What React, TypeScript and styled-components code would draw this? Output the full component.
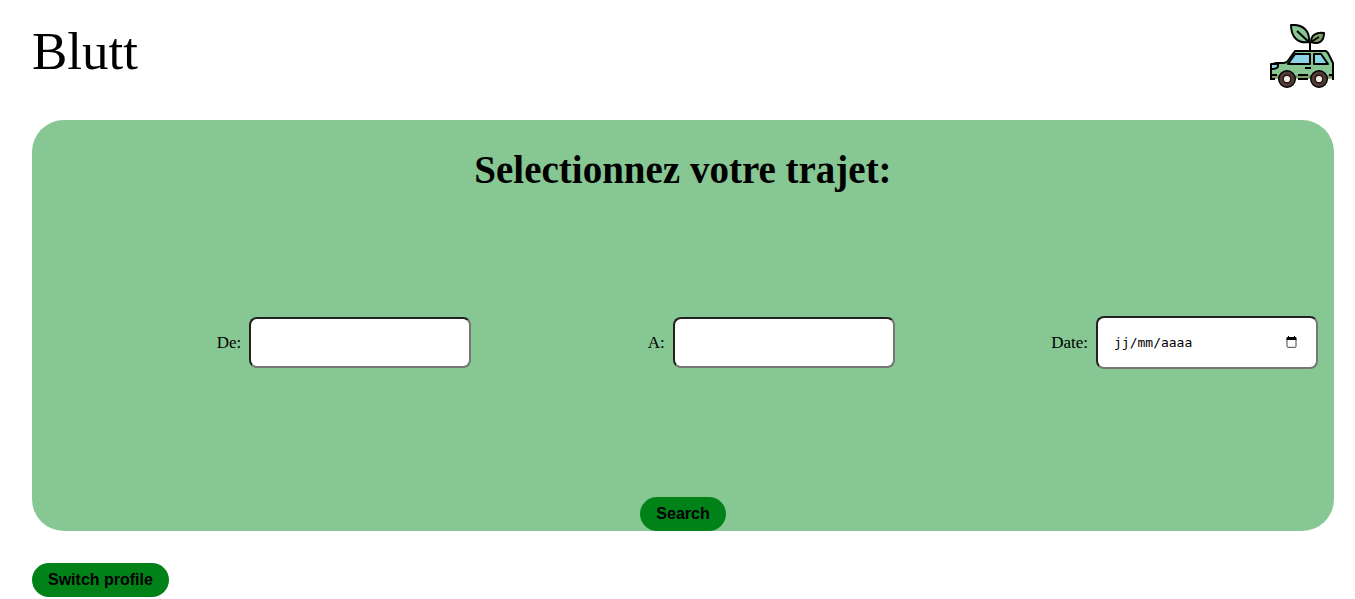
import React from "react";
import styled, { createGlobalStyle } from "styled-components";

const GlobalStyle = createGlobalStyle`
  *, *::before, *::after { box-sizing: border-box; }
  body {
    margin: 0;
    background: #fff;
    color: #000;
    font-family: Georgia, "Liberation Serif", serif;
    font-size: 17px;
  }
`;

const Page = styled.div`
  padding: 24px 21px 0 32px;
`;

const Header = styled.header`
  display: flex;
  align-items: flex-start;
  justify-content: space-between;
  margin-bottom: 32px;
`;

const Brand = styled.div`
  font-size: 53px;
  line-height: 54px;
`;

const Logo = styled.svg`
  display: block;
  width: 64px;
  height: 64px;
`;

const Panel = styled.form`
  display: flex;
  flex-direction: column;
  align-items: center;
  margin: 0 0 32px;
  border-radius: 32px;
  background: #87c793;
`;

const Title = styled.h1`
  margin: 0;
  padding-top: 28px;
  font-size: 39px;
  line-height: 44px;
  text-align: center;
`;

const Fields = styled.div`
  display: grid;
  grid-template-columns: repeat(3, 1fr);
  align-items: center;
  width: 100%;
  padding: 124px 16px 128px;
`;

const Field = styled.div`
  display: flex;
  align-items: center;
  justify-content: flex-end;
  gap: 8px;
`;

const InputBox = styled.div`
  position: relative;
  width: 222px;
`;

const Input = styled.input<{ $tall?: boolean }>`
  display: block;
  width: 100%;
  height: ${(p) => (p.$tall ? 53 : 51)}px;
  padding: 0 16px;
  border: 2px solid;
  border-color: #212121 #767676 #767676 #212121;
  border-radius: 8px;
  background: #fff;
  font-family: "DejaVu Sans Mono", monospace;
  font-size: 13px;

  &::placeholder {
    color: #000;
    opacity: 1;
  }
`;

const CalendarIcon = styled.svg`
  position: absolute;
  top: 20px;
  right: 21px;
  width: 11px;
  height: 12px;
  pointer-events: none;
`;

const Button = styled.button`
  height: 34px;
  padding: 0 16px;
  border: 0;
  border-radius: 17px;
  background: #008219;
  color: #000;
  font: bold 16px "Liberation Sans", Arial, sans-serif;
  cursor: pointer;
`;

function CarLogo() {
  return (
    <Logo viewBox="0 0 64 64" role="img" aria-label="Blutt">
      <g stroke="#000" strokeWidth="2" strokeLinejoin="round">
        <path d="M40 27V18" fill="none" />
        <path d="M39 18C28 20 21 13 21 1C33 0 40 7 39 18Z" fill="#88c794" />
        <path d="M27 7L40 19" fill="none" />
        <path d="M41 18C41 11 46 8 54 9C54 17 49 21 41 18Z" fill="#7f9e63" />
        <path d="M41 18L49 13" fill="none" />
        <path
          d="M1 55V42C2 40 4 39 7 39H14L17 38L25 27H56L58 29L63 39V55Z"
          fill="#88c794"
          stroke="none"
        />
        <path d="M2 51H62V54H2Z" fill="#7f9e63" stroke="none" />
        <path d="M0 55H5M1 55V42C2 40 4 39 7 39H14L17 38L25 27H56L58 29L63 39V56" fill="none" />
        <path d="M28 55H38M28 51H38M2 51H7M59 51H63" fill="none" />
        <path d="M1 40H8V42C8 44 6 45 1 45Z" fill="#8ed3e8" />
        <path d="M18 40L25 30H40V40Z" fill="#8ed3e8" />
        <path d="M44 30H51L58 40H44Z" fill="#8ed3e8" />
        <path d="M35 44H41" fill="none" />
        <circle cx="17" cy="55" r="8" fill="#513b38" />
        <circle cx="49" cy="55" r="8" fill="#513b38" />
        <circle cx="17" cy="55" r="6.6" fill="none" stroke="#513b38" />
        <circle cx="49" cy="55" r="6.6" fill="none" stroke="#513b38" />
      </g>
      <circle cx="17" cy="55" r="3.8" fill="#f3eee2" stroke="#241816" strokeWidth="1.4" />
      <circle cx="49" cy="55" r="3.8" fill="#f3eee2" stroke="#241816" strokeWidth="1.4" />
    </Logo>
  );
}

export default function App() {
  return (
    <>
      <GlobalStyle />
      <Page>
        <Header>
          <Brand>Blutt</Brand>
          <CarLogo />
        </Header>
        <main>
          <Panel onSubmit={(e: React.FormEvent) => e.preventDefault()}>
            <Title>Selectionnez votre trajet:</Title>
            <Fields>
              <Field>
                <label htmlFor="from">De:</label>
                <InputBox>
                  <Input id="from" type="text" />
                </InputBox>
              </Field>
              <Field>
                <label htmlFor="to">A:</label>
                <InputBox>
                  <Input id="to" type="text" />
                </InputBox>
              </Field>
              <Field>
                <label htmlFor="date">Date:</label>
                <InputBox>
                  <Input id="date" type="text" placeholder="jj/mm/aaaa" $tall />
                  <CalendarIcon viewBox="0 0 11 12" aria-hidden="true">
                    <path
                      d="M1 3V10.5Q1 11.3 1.8 11.3H9.2Q10 11.3 10 10.5V3"
                      fill="none"
                      stroke="#444"
                    />
                    <path d="M0.5 4V2Q0.5 1 1.5 1H2V0H3V1H8V0H9V1H9.5Q10.5 1 10.5 2V4Z" fill="#000" />
                  </CalendarIcon>
                </InputBox>
              </Field>
            </Fields>
            <Button type="submit">Search</Button>
          </Panel>
          <Button type="button">Switch profile</Button>
        </main>
      </Page>
    </>
  );
}
